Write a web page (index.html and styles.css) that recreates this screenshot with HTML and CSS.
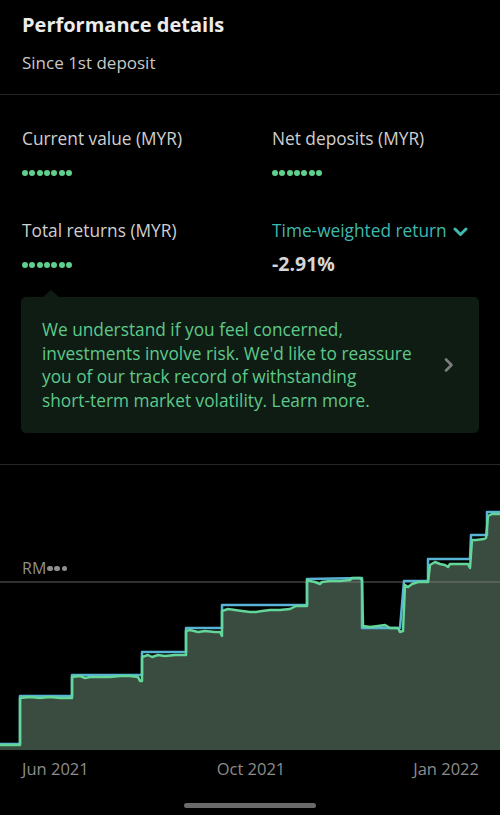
FILE: index.html
```html
<!DOCTYPE html>
<html lang="en">
<head>
<meta charset="utf-8">
<title>Performance details</title>
<link rel="stylesheet" href="styles.css">
</head>
<body>
<div class="screen">
  <header class="header">
    <h1 class="title">Performance details</h1>
    <p class="subtitle">Since 1st deposit</p>
  </header>

  <section class="stats">
    <div class="stat">
      <div class="label">Current value (MYR)</div>
      <div class="dots"><i></i><i></i><i></i><i></i><i></i><i></i><i></i></div>
    </div>
    <div class="stat">
      <div class="label">Net deposits (MYR)</div>
      <div class="dots"><i></i><i></i><i></i><i></i><i></i><i></i><i></i></div>
    </div>
    <div class="stat stat-row2">
      <div class="label">Total returns (MYR)</div>
      <div class="dots dots-low"><i></i><i></i><i></i><i></i><i></i><i></i><i></i></div>
    </div>
    <div class="stat stat-row2">
      <div class="label label-link">Time-weighted return
        <svg class="chev-down" width="15" height="10" viewBox="0 0 15 10"><path d="M2 2 L7.5 7.5 L13 2" fill="none" stroke="#3fb8ae" stroke-width="3" stroke-linecap="round" stroke-linejoin="round"/></svg>
      </div>
      <div class="value">-2.91%</div>
    </div>
  </section>

  <div class="card">
    <p class="card-text">We understand if you feel concerned, investments involve risk. We'd like to reassure you of our track record of withstanding <span class="nowrap">short-term</span> market volatility. Learn more.</p>
    <svg class="chev-right" width="12" height="16" viewBox="0 0 12 16"><path d="M3 2.5 L8.5 8 L3 13.5" fill="none" stroke="#7d7d7d" stroke-width="2.6" stroke-linecap="round" stroke-linejoin="round"/></svg>
  </div>

  <section class="chart">
    <svg class="chart-svg" width="500" height="286" viewBox="0 465 500 286">
      <polygon fill="#394c3f" points="0,745 20,745 20,698 30,697 40,698 50,697 60,698 72,698 72,677 80,676 85,678 90,677 100,677 110,677 120,676 130,676 138,677 140,681 142,681 142,657 148,655 152,657 158,655 165,656 175,655 186,655 186,631 190,630 198,632 205,631 215,632 220,632 222,636 222,611 228,609 235,610 242,611 250,612 256,612 262,611 270,610 280,610 290,609 296,606 300,606 307,606 307,580 310,581 315,582 320,584 322,582 330,581 340,581 350,580 352,578 360,578 362,580 363,626 370,627 378,626 385,625 390,628 398,628 400,632 403,631 405,585 408,587 412,584 418,582 428,582 430,565 435,562 440,564 445,565 448,567 450,564 460,564 468,564 470,568 472,540 476,540 484,539 486,538 488,516 492,514 500,514 500,750 0,750"/>
      <line x1="0" y1="582" x2="500" y2="582" stroke="#8a8a8a" stroke-opacity="0.7" stroke-width="1"/>
      <polyline fill="none" stroke="#58b3d6" stroke-width="2.5" stroke-linejoin="round" points="0,744 20,744 20,696 72,696 72,675 142,675 142,652 186,652 186,628 222,628 222,605 307,605 307,579 362,578 362,628 400,628 404,581 428,581 428,559 470,559 471,535 487,535 487,512 500,512"/>
      <polyline fill="none" stroke="#63d69a" stroke-width="2.5" stroke-linejoin="round" points="0,745 20,745 20,698 30,697 40,698 50,697 60,698 72,698 72,677 80,676 85,678 90,677 100,677 110,677 120,676 130,676 138,677 140,681 142,681 142,657 148,655 152,657 158,655 165,656 175,655 186,655 186,631 190,630 198,632 205,631 215,632 220,632 222,636 222,611 228,609 235,610 242,611 250,612 256,612 262,611 270,610 280,610 290,609 296,606 300,606 307,606 307,580 310,581 315,582 320,584 322,582 330,581 340,581 350,580 352,578 360,578 362,580 363,626 370,627 378,626 385,625 390,628 398,628 400,632 403,631 405,585 408,587 412,584 418,582 428,582 430,565 435,562 440,564 445,565 448,567 450,564 460,564 468,564 470,568 472,540 476,540 484,539 486,538 488,516 492,514 500,514"/>
    </svg>
    <div class="rm-label">RM<span class="rm-dots"><i></i><i></i><i></i></span></div>
  </section>

  <div class="axis">
    <span>Jun 2021</span>
    <span>Oct 2021</span>
    <span>Jan 2022</span>
  </div>

  <div class="home-bar"><span></span></div>
</div>
</body>
</html>
```

FILE: styles.css
```css
* { box-sizing: border-box; }
html, body {
  margin: 0;
  padding: 0;
  background: #000;
}
body {
  font-family: "Open Sans", "Noto Sans", "Liberation Sans", sans-serif;
  color: #e6e6e6;
  width: 500px;
  height: 815px;
  overflow: hidden;
}
.screen {
  display: flex;
  flex-direction: column;
  height: 815px;
}
.header {
  padding: 11px 22px 0;
  height: 95px;
  border-bottom: 1px solid #262626;
}
.title {
  margin: 0;
  font-size: 20px;
  line-height: 28px;
  font-weight: 700;
  color: #ececec;
}
.subtitle {
  margin: 12px 0 0;
  font-size: 17px;
  line-height: 23px;
  color: #c8c8c8;
}
.stats {
  display: grid;
  grid-template-columns: 250px 1fr;
  padding: 0 0 0 22px;
}
.stat {
  display: flex;
  flex-direction: column;
}
.label {
  margin-top: 32px;
  font-size: 17.3px;
  line-height: 24px;
  color: #cfcfcf;
  display: flex;
  align-items: center;
  gap: 6px;
}
.stat-row2 .label { margin-top: 42px; }
.label-link { color: #3fb8ae; }
.chev-down { margin-top: 1px; }
.dots {
  display: flex;
  gap: 1.33px;
  margin-top: 19px;
  height: 7px;
}
.dots i {
  display: block;
  width: 6px;
  height: 6px;
  border-radius: 50%;
  background: #5fcf8c;
}
.dots-low { margin-top: 19px; }
.value {
  margin-top: 8px;
  font-size: 19.5px;
  line-height: 26px;
  font-weight: 700;
  color: #d6d6d6;
}
.card {
  position: relative;
  margin: 20px 21px 0;
  height: 136px;
  background: #0f1c14;
  border-radius: 5px;
  display: flex;
  align-items: center;
  padding: 0 24px 0 21px;
}
.card::before {
  content: "";
  position: absolute;
  top: -7px;
  left: 22px;
  border-left: 8px solid transparent;
  border-right: 8px solid transparent;
  border-bottom: 7px solid #0f1c14;
}
.card-text {
  margin: 0;
  flex: 1;
  font-size: 17.3px;
  line-height: 23.5px;
  color: #5ec98a;
  padding-right: 20px;
}
.nowrap { white-space: nowrap; }
.chev-right { flex: none; }
.chart {
  position: relative;
  margin-top: 31px;
  border-top: 1px solid #262626;
  height: 287px;
}
.chart-svg {
  display: block;
}
.rm-label {
  position: absolute;
  left: 22px;
  top: 93px;
  font-size: 16px;
  line-height: 20px;
  color: #8f8f8f;
  display: flex;
  align-items: center;
}
.rm-dots {
  display: flex;
  gap: 1.7px;
  margin-left: 1px;
  margin-top: 1px;
}
.rm-dots i {
  display: block;
  width: 5.5px;
  height: 5.5px;
  border-radius: 50%;
  background: #8f8f8f;
}
.axis {
  display: flex;
  justify-content: space-between;
  padding: 6px 21px 0 22px;
  font-size: 16.5px;
  line-height: 24px;
  color: #8c8c8c;
}
.home-bar {
  display: flex;
  justify-content: center;
  padding-top: 22px;
}
.home-bar span {
  display: block;
  width: 132px;
  height: 5px;
  border-radius: 3px;
  background: #6a6a6a;
}
```
